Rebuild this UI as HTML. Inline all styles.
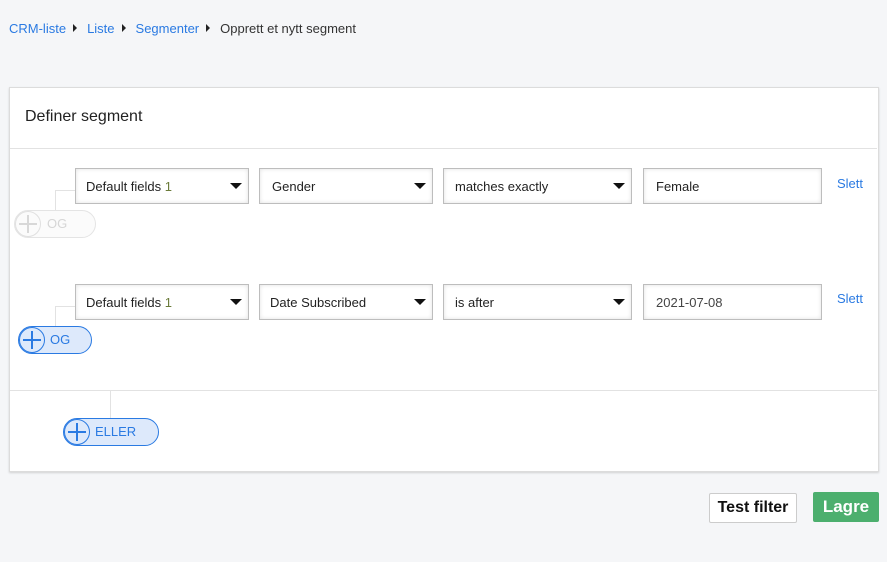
<!DOCTYPE html>
<html><head><style>
body{margin:0;width:887px;height:562px;background:#f5f6f8;font-family:"Liberation Sans",Arial,sans-serif;position:relative;overflow:hidden}
.a{position:absolute}
.bc{top:21px;left:9px;font-size:13px;color:#333}
.bc span.l{color:#2a7ae2}
.bc .t{display:inline-block;width:0;height:0;border-left:4px solid #222;border-top:4px solid transparent;border-bottom:4px solid transparent;margin:0 10px 1px 7px}
.card{left:9px;top:87px;width:868px;height:383px;background:#fff;border:1px solid #dcdcdc;box-shadow:0 1px 2px rgba(0,0,0,.15)}
.sel{border:1px solid #bdbdbd;background:#fff;box-shadow:inset 0 0 4px rgba(0,0,0,.12);font-size:13px;color:#222;line-height:36px;padding-left:10px;box-sizing:border-box;height:36px}
.sel .ar{position:absolute;right:6px;top:14px;border-top:6px solid #111;border-left:6px solid transparent;border-right:6px solid transparent}
.slett{font-size:13px;color:#2a7ae2}
.ln{background:#e2e2e2}
.pill{border-radius:15px;box-sizing:border-box;height:28px;font-size:13px;line-height:26px}
.pill .c{position:absolute;left:0;top:0;width:26px;height:26px;border-radius:50%;box-sizing:border-box}
.pill .c:before,.pill .c:after{content:"";position:absolute;background:currentColor}
.pill .c:before{left:3px;right:3px;top:11px;height:2px}
.pill .c:after{top:3px;bottom:3px;left:11px;width:2px}
.btn{font-size:16px;font-weight:bold;text-align:center;border-radius:2px;box-sizing:border-box}
</style></head><body>
<div class="a bc"><span class="l">CRM-liste</span><span class="t"></span><span class="l">Liste</span><span class="t"></span><span class="l">Segmenter</span><span class="t"></span>Opprett et nytt segment</div>
<div class="a card"></div>
<div class="a" style="left:25px;top:108px;font-size:16px;color:#222">Definer segment</div>
<div class="a ln" style="left:10px;top:148px;width:867px;height:1px"></div>
<div class="a ln" style="left:10px;top:390px;width:867px;height:1px"></div>

<div class="a ln" style="left:55px;top:190px;width:20px;height:1px"></div>
<div class="a ln" style="left:55px;top:190px;width:1px;height:20px"></div>
<div class="a ln" style="left:55px;top:306px;width:20px;height:1px"></div>
<div class="a ln" style="left:55px;top:306px;width:1px;height:20px"></div>
<div class="a ln" style="left:110px;top:391px;width:1px;height:27px"></div>

<div class="a sel" style="left:75px;top:168px;width:174px">Default fields <span style="color:#6b7b3a">1</span><i class="ar"></i></div>
<div class="a sel" style="left:259px;top:168px;width:174px;padding-left:12px">Gender<i class="ar"></i></div>
<div class="a sel" style="left:443px;top:168px;width:189px;padding-left:11px">matches exactly<i class="ar"></i></div>
<div class="a sel" style="left:643px;top:168px;width:179px;padding-left:12px">Female</div>
<div class="a slett" style="left:837px;top:176px">Slett</div>

<div class="a sel" style="left:75px;top:284px;width:174px">Default fields <span style="color:#6b7b3a">1</span><i class="ar"></i></div>
<div class="a sel" style="left:259px;top:284px;width:174px">Date Subscribed<i class="ar"></i></div>
<div class="a sel" style="left:443px;top:284px;width:189px;padding-left:11px">is after<i class="ar"></i></div>
<div class="a sel" style="left:643px;top:284px;width:179px;color:#444;padding-left:12px">2021-07-08</div>
<div class="a slett" style="left:837px;top:291px">Slett</div>

<div class="a pill" style="left:14px;top:210px;width:82px;border:1px solid #e4e4e4;color:#d6d6d6;background:#fbfbfb;padding-left:32px"><span class="c" style="border:1.5px solid #e0e0e0;color:#d8d8d8"></span>OG</div>
<div class="a pill" style="left:18px;top:326px;width:74px;border:1px solid #2a7ae2;color:#2a7ae2;background:#dde9fb;padding-left:31px"><span class="c" style="border:1.5px solid #2a7ae2;color:#2a7ae2"></span>OG</div>
<div class="a pill" style="left:63px;top:418px;width:96px;border:1px solid #2a7ae2;color:#2a7ae2;background:#dde9fb;padding-left:31px"><span class="c" style="border:1.5px solid #2a7ae2;color:#2a7ae2"></span>ELLER</div>

<div class="a btn" style="left:709px;top:493px;width:88px;height:30px;line-height:28px;background:#fff;border:1px solid #ccc;color:#111">Test filter</div>
<div class="a btn" style="left:813px;top:492px;width:66px;height:30px;line-height:30px;background:#4caf6e;color:#fff;font-size:17px">Lagre</div>
</body></html>
